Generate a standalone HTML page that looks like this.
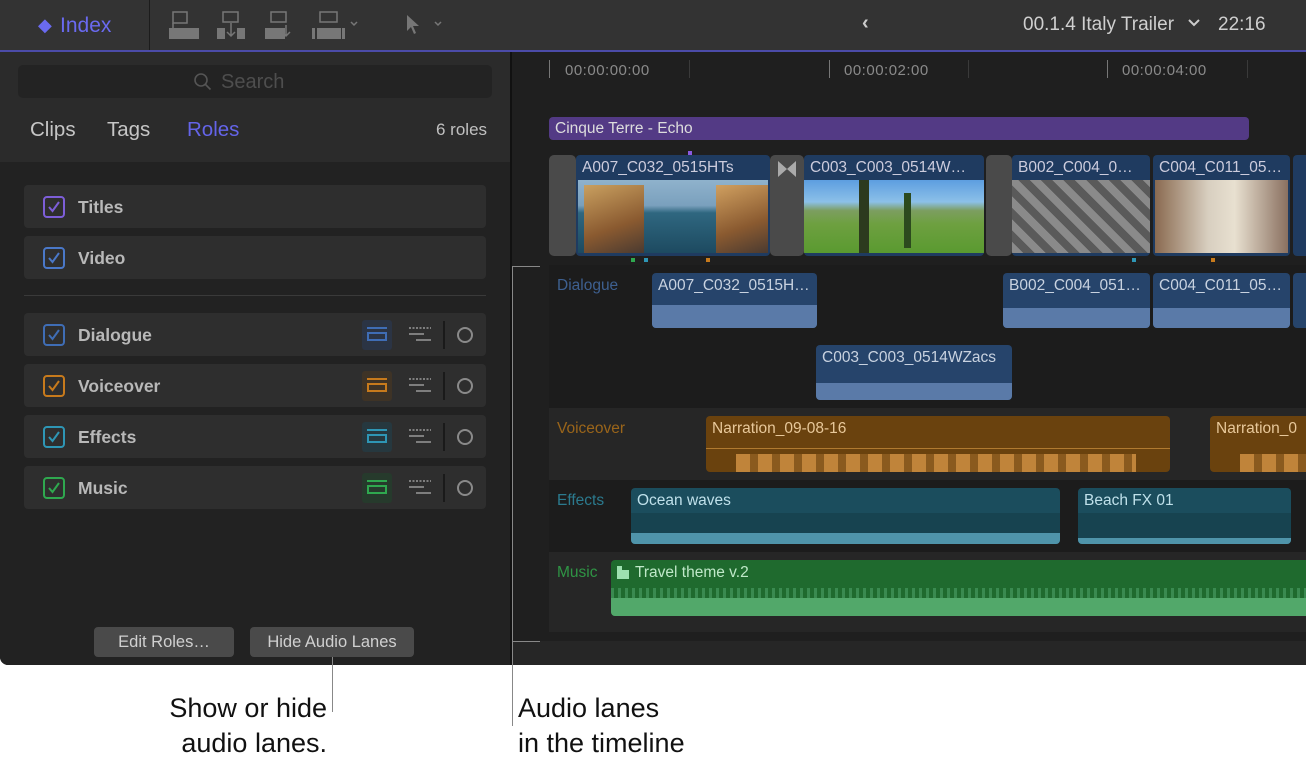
<!DOCTYPE html>
<html><head><meta charset="utf-8"><style>
*{margin:0;padding:0;box-sizing:border-box}
body{width:1306px;height:766px;background:#fff;position:relative;overflow:hidden;font-family:"Liberation Sans",sans-serif}
.a{position:absolute}
.app{position:absolute;left:0;top:0;width:1306px;height:665px;background:#1f1f1f;border-bottom-left-radius:8px;overflow:hidden}
.row{position:absolute;left:24px;width:462px;height:43px;background:#2e2e2e;border-radius:4px}
.row .cb{position:absolute;left:19px;top:11px;width:22px;height:22px;border:2px solid;border-radius:4px}
.row .cb svg{position:absolute;left:2px;top:2px}
.row .t{position:absolute;left:54px;top:12px;font-size:17.5px;font-weight:bold;color:#b8b8b8}
.li{position:absolute;left:338px;top:7px;width:30px;height:30px;border-radius:3px}
.li i{position:absolute;left:5px;width:20px;border-top:2px solid}
.li b{position:absolute;left:5px;top:12px;width:20px;height:9px;border:2px solid}
.ls{position:absolute;left:385px;top:14px;width:22px}
.dv{position:absolute;left:419px;top:8px;width:2px;height:28px;background:#1a1a1a}
.ci{position:absolute;left:433px;top:14px;width:16px;height:16px;border:2px solid #8a8a8a;border-radius:50%}
.btn{position:absolute;top:627px;height:30px;background:#4a4a4a;border-radius:4px;color:#d0d0d0;font-size:16.5px;text-align:center;line-height:31px}
.clip{position:absolute;border-radius:4px;overflow:hidden}
.clip .n{position:absolute;left:6px;top:4px;font-size:15.5px;white-space:nowrap}
.lbl{position:absolute;left:557px;font-size:15.5px}
.ts{position:absolute;top:62px;font-size:15px;color:#8a8a8a;letter-spacing:.5px}
.tk{position:absolute;top:60px;width:1px;height:18px;background:#777}
.tk2{position:absolute;top:60px;width:1px;height:18px;background:#3a3a3a}
.cap{position:absolute;font-size:27px;color:#111;line-height:35px}
</style></head><body>
<div class="app">
 <div class="a" style="left:0;top:0;width:1306px;height:50px;background:#333"></div>
 <div class="a" style="left:0;top:50px;width:1306px;height:2px;background:#4b4ba8"></div>
 <div class="a" style="left:149px;top:0;width:1px;height:50px;background:#1c1c1c"></div>
 <div class="a" style="left:38px;top:15px;color:#6a6af0;font-size:18px">&#9670;</div>
 <div class="a" style="left:60px;top:14px;color:#6a6af0;font-size:21px">Index</div>
 <svg class="a" style="left:165px;top:10px" width="290" height="32">
  <g fill="#777"><rect x="4" y="18" width="30" height="11"/><rect x="52" y="18" width="8" height="11"/><rect x="72" y="18" width="8" height="11"/><rect x="100" y="18" width="20" height="11"/><rect x="147" y="18" width="3" height="11"/><rect x="152" y="18" width="24" height="11"/><rect x="177" y="18" width="3" height="11"/></g>
  <g fill="none" stroke="#777" stroke-width="1.5"><rect x="8" y="2" width="14" height="11"/><path d="M8 13v6"/><rect x="58" y="2" width="15" height="10"/><path d="M66 13v13M62 22l4 4 4-4"/><rect x="106" y="2" width="15" height="10"/><path d="M121 15v11M117 22l4 4 4-4"/><rect x="155" y="2" width="17" height="10"/><path d="M186 12l3 3 3-3M270 12l3 3 3-3"/></g>
  <path d="M242 5l0 16 4-4 3 7 2-1-3-7 6 0z" fill="#777"/>
 </svg>
 <div class="a" style="left:862px;top:12px;color:#ccc;font-size:20px;font-weight:bold">&#8249;</div>
 <div class="a" style="left:1023px;top:14px;color:#cfcfcf;font-size:19px">00.1.4 Italy Trailer</div>
 <svg class="a" style="left:1188px;top:19px" width="12" height="8"><path d="M1 1l5 5 5-5" stroke="#ccc" stroke-width="2" fill="none"/></svg>
 <div class="a" style="left:1218px;top:14px;color:#cfcfcf;font-size:19px">22:16</div>

 <div class="a" style="left:0;top:52px;width:510px;height:110px;background:#2b2b2b"></div>
 <div class="a" style="left:0;top:162px;width:510px;height:503px;background:#222"></div>
 <div class="a" style="left:510px;top:52px;width:2px;height:613px;background:#111"></div>
 <div class="a" style="left:18px;top:65px;width:474px;height:33px;background:#232323;border-radius:5px"></div>
 <svg class="a" style="left:193px;top:72px" width="20" height="20"><circle cx="8" cy="8" r="6" stroke="#555" stroke-width="1.6" fill="none"/><path d="M12.5 12.5l5 5" stroke="#555" stroke-width="1.6"/></svg>
 <div class="a" style="left:221px;top:71px;color:#4e4e4e;font-size:20px">Search</div>
 <div class="a" style="left:30px;top:118px;color:#c6c6c6;font-size:20.5px">Clips</div>
 <div class="a" style="left:107px;top:118px;color:#c6c6c6;font-size:20.5px">Tags</div>
 <div class="a" style="left:187px;top:118px;color:#6464e8;font-size:20.5px">Roles</div>
 <div class="a" style="left:436px;top:120px;color:#c0c0c0;font-size:17px">6 roles</div>

 <div class="row" style="top:185px"><div class="cb" style="border-color:#7d5ed8"><svg width="14" height="14"><path d="M2 7l3.5 4L12 2" stroke="#7d5ed8" stroke-width="2" fill="none"/></svg></div><div class="t">Titles</div></div>
 <div class="row" style="top:236px"><div class="cb" style="border-color:#4a78c8"><svg width="14" height="14"><path d="M2 7l3.5 4L12 2" stroke="#4a78c8" stroke-width="2" fill="none"/></svg></div><div class="t">Video</div></div>
 <div class="a" style="left:24px;top:295px;width:462px;height:1px;background:#3a3a3a"></div>

 <div class="row" style="top:313px"><div class="cb" style="border-color:#3f6db5"><svg width="14" height="14"><path d="M2 7l3.5 4L12 2" stroke="#3f6db5" stroke-width="2" fill="none"/></svg></div><div class="t">Dialogue</div>
  <div class="li" style="background:#2b3444;color:#3f6db5"><i style="top:7px"></i><b></b></div>
  <svg class="ls" width="22" height="16"><path d="M0 1h22" stroke="#999" stroke-width="1.5" stroke-dasharray="2 1.5"/><path d="M0 7h15M7 13h15" stroke="#999" stroke-width="1.5"/></svg><div class="dv"></div><div class="ci"></div></div>
 <div class="row" style="top:364px"><div class="cb" style="border-color:#c77a1c"><svg width="14" height="14"><path d="M2 7l3.5 4L12 2" stroke="#c77a1c" stroke-width="2" fill="none"/></svg></div><div class="t">Voiceover</div>
  <div class="li" style="background:#3e3326;color:#c77a1c"><i style="top:7px"></i><b></b></div>
  <svg class="ls" width="22" height="16"><path d="M0 1h22" stroke="#999" stroke-width="1.5" stroke-dasharray="2 1.5"/><path d="M0 7h15M7 13h15" stroke="#999" stroke-width="1.5"/></svg><div class="dv"></div><div class="ci"></div></div>
 <div class="row" style="top:415px"><div class="cb" style="border-color:#2e96b5"><svg width="14" height="14"><path d="M2 7l3.5 4L12 2" stroke="#2e96b5" stroke-width="2" fill="none"/></svg></div><div class="t">Effects</div>
  <div class="li" style="background:#26383f;color:#2e96b5"><i style="top:7px"></i><b></b></div>
  <svg class="ls" width="22" height="16"><path d="M0 1h22" stroke="#999" stroke-width="1.5" stroke-dasharray="2 1.5"/><path d="M0 7h15M7 13h15" stroke="#999" stroke-width="1.5"/></svg><div class="dv"></div><div class="ci"></div></div>
 <div class="row" style="top:466px"><div class="cb" style="border-color:#2fa84f"><svg width="14" height="14"><path d="M2 7l3.5 4L12 2" stroke="#2fa84f" stroke-width="2" fill="none"/></svg></div><div class="t">Music</div>
  <div class="li" style="background:#263a2c;color:#2fa84f"><i style="top:7px"></i><b></b></div>
  <svg class="ls" width="22" height="16"><path d="M0 1h22" stroke="#999" stroke-width="1.5" stroke-dasharray="2 1.5"/><path d="M0 7h15M7 13h15" stroke="#999" stroke-width="1.5"/></svg><div class="dv"></div><div class="ci"></div></div>

 <div class="btn" style="left:94px;width:140px">Edit Roles…</div>
 <div class="btn" style="left:250px;width:164px">Hide Audio Lanes</div>

 <div class="tk" style="left:549px"></div><div class="ts" style="left:565px">00:00:00:00</div><div class="tk2" style="left:689px"></div>
 <div class="tk" style="left:829px"></div><div class="ts" style="left:844px">00:00:02:00</div><div class="tk2" style="left:968px"></div>
 <div class="tk" style="left:1107px"></div><div class="ts" style="left:1122px">00:00:04:00</div><div class="tk2" style="left:1247px"></div>
 <div class="a" style="left:549px;top:117px;width:700px;height:23px;background:#533a85;border-radius:4px;color:#ddd;font-size:15.5px;padding:3px 6px">Cinque Terre - Echo</div>
 <div class="a" style="left:688px;top:151px;width:4px;height:4px;background:#8a5ae0"></div>

 <div class="a" style="left:549px;top:155px;width:27px;height:101px;background:#4a4a4a;border-radius:5px"></div>
 <div class="clip" style="left:576px;top:155px;width:194px;height:101px;background:#1f3b60"><div class="n" style="color:#ccd">A007_C032_0515HTs</div>
  <div class="a" style="left:2px;top:25px;width:190px;height:73px;background:linear-gradient(180deg,#8fb2cc 0%,#7aa0bd 35%,#2f6780 45%,#1d4a60 100%)"></div>
  <div class="a" style="left:8px;top:30px;width:60px;height:68px;background:linear-gradient(160deg,#c9a060,#8a5a30 60%,#4a3a30)"></div>
  <div class="a" style="left:140px;top:30px;width:52px;height:68px;background:linear-gradient(160deg,#d0a060,#8a5a30 60%,#4a3a30)"></div></div>
 <div class="a" style="left:770px;top:155px;width:34px;height:101px;background:#4a4a4a;border-radius:5px"></div>
 <svg class="a" style="left:776px;top:160px" width="22" height="18"><path d="M2 1l9 8-9 8zM20 1l-9 8 9 8z" fill="#aaa"/></svg>
 <div class="clip" style="left:804px;top:155px;width:180px;height:101px;background:#1f3b60"><div class="n" style="color:#ccd">C003_C003_0514W…</div>
  <div class="a" style="left:0;top:25px;width:180px;height:73px;background:linear-gradient(180deg,#5d9ee0 0%,#8cc0e8 30%,#7c9e60 42%,#6ea040 60%,#5a9a30 100%)"></div>
  <div class="a" style="left:55px;top:25px;width:10px;height:73px;background:#2c3a1e"></div><div class="a" style="left:100px;top:38px;width:7px;height:55px;background:#2c4a1e"></div></div>
 <div class="a" style="left:986px;top:155px;width:26px;height:101px;background:#4a4a4a;border-radius:5px"></div>
 <div class="clip" style="left:1012px;top:155px;width:138px;height:101px;background:#1f3b60"><div class="n" style="color:#ccd">B002_C004_0…</div>
  <div class="a" style="left:0;top:25px;width:138px;height:73px;background:repeating-linear-gradient(45deg,#8a8a8a 0 8px,#5a5a5a 8px 16px)"></div></div>
 <div class="clip" style="left:1153px;top:155px;width:137px;height:101px;background:#1f3b60"><div class="n" style="color:#ccd">C004_C011_05…</div>
  <div class="a" style="left:2px;top:25px;width:133px;height:73px;background:linear-gradient(90deg,#8a6a50,#d8cfc0 40%,#e8e0d0 60%,#8a7060)"></div></div>
 <div class="clip" style="left:1293px;top:155px;width:20px;height:101px;background:#1f3b60"></div>
 <div class="a" style="left:631px;top:258px;width:4px;height:4px;background:#2fa84f"></div>
 <div class="a" style="left:644px;top:258px;width:4px;height:4px;background:#2e96b5"></div>
 <div class="a" style="left:706px;top:258px;width:4px;height:4px;background:#c77a1c"></div>
 <div class="a" style="left:1132px;top:258px;width:4px;height:4px;background:#2e96b5"></div>
 <div class="a" style="left:1211px;top:258px;width:4px;height:4px;background:#c77a1c"></div>

 <div class="a" style="left:549px;top:265px;width:757px;height:143px;background:#1c1c1c"></div>
 <div class="a" style="left:549px;top:408px;width:757px;height:72px;background:#262626"></div>
 <div class="a" style="left:549px;top:480px;width:757px;height:72px;background:#1c1c1c"></div>
 <div class="a" style="left:549px;top:552px;width:757px;height:80px;background:#262626"></div>
 <div class="a" style="left:512px;top:641px;width:794px;height:24px;background:#262626"></div>
 <div class="lbl" style="top:277px;color:#3e6090">Dialogue</div>
 <div class="lbl" style="top:420px;color:#9a651a">Voiceover</div>
 <div class="lbl" style="top:492px;color:#2b7a8e">Effects</div>
 <div class="lbl" style="top:564px;color:#2f9545">Music</div>

 <div class="clip" style="left:652px;top:273px;width:165px;height:55px;background:#26446b"><div class="n" style="color:#c8d2e0">A007_C032_0515H…</div><div class="a" style="left:0;top:32px;width:100%;height:23px;background:#5a7aa8"></div></div>
 <div class="clip" style="left:1003px;top:273px;width:147px;height:55px;background:#26446b"><div class="n" style="color:#c8d2e0">B002_C004_051…</div><div class="a" style="left:0;top:35px;width:100%;height:20px;background:#5a7aa8"></div></div>
 <div class="clip" style="left:1153px;top:273px;width:137px;height:55px;background:#26446b"><div class="n" style="color:#c8d2e0">C004_C011_05…</div><div class="a" style="left:0;top:35px;width:100%;height:20px;background:#5a7aa8"></div></div>
 <div class="clip" style="left:1293px;top:273px;width:20px;height:55px;background:#26446b"></div>
 <div class="clip" style="left:816px;top:345px;width:196px;height:55px;background:#26446b"><div class="n" style="color:#c8d2e0">C003_C003_0514WZacs</div><div class="a" style="left:0;top:38px;width:100%;height:17px;background:#5a7aa8"></div></div>

 <div class="clip" style="left:706px;top:416px;width:464px;height:56px;background:#6a420e"><div class="n" style="color:#e8c89a">Narration_09-08-16</div><div class="a" style="left:0;top:32px;width:100%;height:1px;background:#b07a30"></div><div class="a" style="left:30px;top:38px;width:400px;height:18px;background:repeating-linear-gradient(90deg,#c0843a 0 14px,#8a5a1e 14px 22px)"></div></div>
 <div class="clip" style="left:1210px;top:416px;width:100px;height:56px;background:#6a420e"><div class="n" style="color:#e8c89a">Narration_0</div><div class="a" style="left:30px;top:38px;width:80px;height:18px;background:repeating-linear-gradient(90deg,#c0843a 0 14px,#8a5a1e 14px 22px)"></div></div>

 <div class="clip" style="left:631px;top:488px;width:429px;height:56px;background:#1b4d5d"><div class="n" style="color:#bfe0ea">Ocean waves</div><div class="a" style="left:0;top:25px;width:100%;height:31px;background:#174350"></div><div class="a" style="left:0;top:45px;width:100%;height:11px;background:#4f94aa"></div></div>
 <div class="clip" style="left:1078px;top:488px;width:213px;height:56px;background:#1b4d5d"><div class="n" style="color:#bfe0ea">Beach FX 01</div><div class="a" style="left:0;top:25px;width:100%;height:31px;background:#174350"></div><div class="a" style="left:0;top:50px;width:100%;height:6px;background:#4f94aa"></div></div>

 <div class="clip" style="left:611px;top:560px;width:700px;height:56px;background:#1f6a2e;border-radius:4px 0 0 4px"><div class="n" style="color:#bfe8c8;left:24px">Travel theme v.2</div>
  <svg class="a" style="left:5px;top:5px" width="14" height="15"><path d="M1 1h5v4h7v9H1z" fill="#9ee0b0"/></svg>
  <div class="a" style="left:0;top:36px;width:100%;height:20px;background:#52a86a"></div><div class="a" style="left:0;top:28px;width:100%;height:10px;background:repeating-linear-gradient(90deg,#3a8a50 0 3px,#1f6a2e 3px 7px)"></div></div>
</div>

<div class="a" style="left:512px;top:266px;width:1px;height:460px;background:#888"></div>
<div class="a" style="left:512px;top:266px;width:28px;height:1px;background:#888"></div>
<div class="a" style="left:512px;top:641px;width:28px;height:1px;background:#888"></div>
<div class="a" style="left:332px;top:657px;width:1px;height:55px;background:#888"></div>
<div class="cap" style="left:100px;top:691px;width:227px;text-align:right">Show or hide<br>audio lanes.</div>
<div class="cap" style="left:518px;top:691px">Audio lanes<br>in the timeline</div>
</body></html>
